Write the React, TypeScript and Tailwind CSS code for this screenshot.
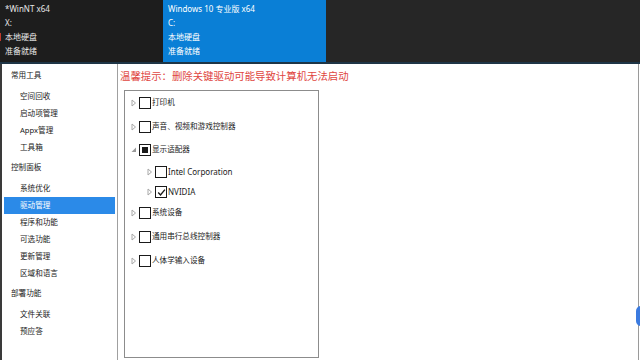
import React from 'react';

const font = { fontFamily: '"Noto Sans", "Noto Sans CJK SC", sans-serif' };

type Node = { label: string; state: 'none' | 'mixed' | 'checked'; expanded?: boolean; child?: boolean; h: number };

const nodes: Node[] = [
  { label: '打印机', state: 'none', h: 24 },
  { label: '声音、视频和游戏控制器', state: 'none', h: 24 },
  { label: '显示适配器', state: 'mixed', expanded: true, h: 22 },
  { label: 'Intel Corporation', state: 'none', child: true, h: 22 },
  { label: 'NVIDIA', state: 'checked', child: true, h: 18 },
  { label: '系统设备', state: 'none', h: 24 },
  { label: '通用串行总线控制器', state: 'none', h: 24 },
  { label: '人体学输入设备', state: 'none', h: 24 },
];

const menu: { label: string; head?: boolean; active?: boolean }[] = [
  { label: '常用工具', head: true },
  { label: '空间回收' },
  { label: '启动项管理' },
  { label: 'Appx管理' },
  { label: '工具箱' },
  { label: '控制面板', head: true },
  { label: '系统优化' },
  { label: '驱动管理', active: true },
  { label: '程序和功能' },
  { label: '可选功能' },
  { label: '更新管理' },
  { label: '区域和语言' },
  { label: '部署功能', head: true },
  { label: '文件关联' },
  { label: '预应答' },
];

function Arrow({ expanded }: { expanded?: boolean }) {
  return (
    <svg width="6" height="8" viewBox="0 0 6 8" className="shrink-0">
      {expanded ? (
        <path d="M5 1.5 L5 6 L0.5 6 Z" fill="#9a9a9a" />
      ) : (
        <path d="M1 1 L4.5 4 L1 7 Z" fill="none" stroke="#a8a8a8" strokeWidth="1" />
      )}
    </svg>
  );
}

function Box({ state }: { state: Node['state'] }) {
  return (
    <div className="w-[12px] h-[12px] border-[1.5px] border-[#1a1a1a] bg-white flex items-center justify-center shrink-0">
      {state === 'mixed' && <div className="w-[6px] h-[6px] bg-[#1a1a1a]" />}
      {state === 'checked' && (
        <svg width="9" height="9" viewBox="0 0 9 9">
          <path d="M1.2 4.6 L3.5 6.9 L7.9 1.6" fill="none" stroke="#1a1a1a" strokeWidth="1.4" />
        </svg>
      )}
    </div>
  );
}

export default function App() {
  return (
    <div className="relative w-[640px] h-[360px] overflow-hidden bg-white flex flex-col" style={font}>
      {/* top drive bar */}
      <div className="h-[64px] bg-[#262626] border-b-2 border-[#1e3546] flex shrink-0">
        <div className="w-[163px] bg-[#1d1d1d] pl-[5px] pt-[2px] text-[8px] text-[#e8e8e8] leading-[14px]">
          <div>*WinNT x64</div>
          <div>X:</div>
          <div>本地硬盘</div>
          <div>准备就绪</div>
        </div>
        <div className="w-[163px] bg-[#0a7fd6] pl-[5px] pt-[2px] text-[8px] text-white leading-[14px]">
          <div>Windows 10 专业版 x64</div>
          <div>C:</div>
          <div>本地硬盘</div>
          <div>准备就绪</div>
        </div>
      </div>
      <div className="absolute left-0 top-[33px] w-[1px] h-[8px] bg-[#c0392b]" />

      <div className="flex flex-1 min-h-0 border-l-2 border-[#3a3a3a]">
        {/* sidebar */}
        <div className="w-[116px] border-r border-[#a0a0a0] text-[7.6px] text-[#222] flex flex-col shrink-0">
          {menu.map((m) =>
            m.head ? (
              <div key={m.label} className="h-[24px] flex items-center pl-[9px] shrink-0">
                {m.label}
              </div>
            ) : (
              <div
                key={m.label}
                className={`h-[17px] flex items-center pl-[16px] mx-[2px] shrink-0 ${m.active ? 'bg-[#2b8ae8] text-white' : ''}`}
              >
                {m.label}
              </div>
            )
          )}
        </div>

        {/* content */}
        <div className="flex-1 flex flex-col pl-[2px] border-r border-[#9a9a9a] mr-[1px]">
          <div className="h-[26px] flex items-center text-[10.4px] text-[#e0463f] shrink-0">
            温馨提示：删除关键驱动可能导致计算机无法启动
          </div>
          <div className="ml-[4px] w-[195px] h-[268px] border border-[#8c8c8c] flex flex-col text-[7.6px] text-[#222]">
            {nodes.map((n) => (
              <div
                key={n.label}
                className={`flex items-center shrink-0 ${n.child ? 'pl-[22px]' : 'pl-[6px]'}`}
                style={{ height: n.h }}
              >
                <Arrow expanded={n.expanded} />
                <div className="ml-[2px]">
                  <Box state={n.state} />
                </div>
                <span className={`ml-[1px] ${n.child ? 'text-[8px]' : ''}`}>{n.label}</span>
              </div>
            ))}
          </div>
        </div>
      </div>
      <div className="absolute right-[-6px] top-[306px] w-[10px] h-[20px] rounded-full bg-[#3b7be0]" />
    </div>
  );
}
